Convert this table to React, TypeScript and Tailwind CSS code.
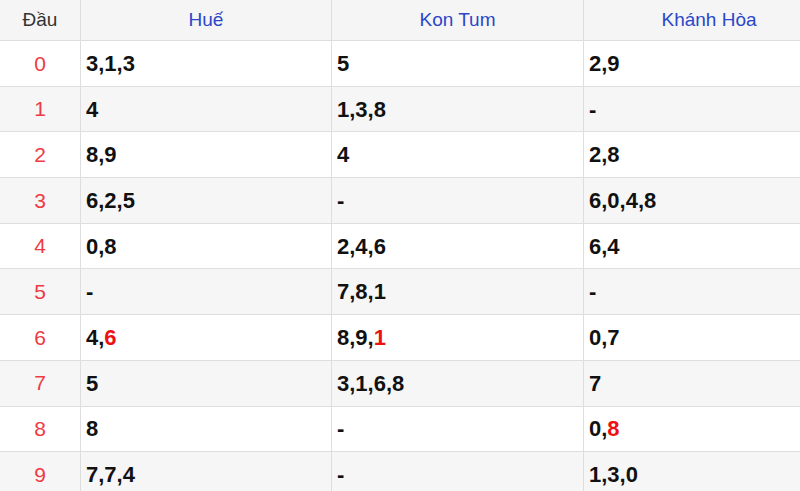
import React from "react";

type Part = { t: string; red?: boolean };
const rows: Part[][][] = [
  [[{ t: "3,1,3" }], [{ t: "5" }], [{ t: "2,9" }]],
  [[{ t: "4" }], [{ t: "1,3,8" }], [{ t: "-" }]],
  [[{ t: "8,9" }], [{ t: "4" }], [{ t: "2,8" }]],
  [[{ t: "6,2,5" }], [{ t: "-" }], [{ t: "6,0,4,8" }]],
  [[{ t: "0,8" }], [{ t: "2,4,6" }], [{ t: "6,4" }]],
  [[{ t: "-" }], [{ t: "7,8,1" }], [{ t: "-" }]],
  [[{ t: "4," }, { t: "6", red: true }], [{ t: "8,9," }, { t: "1", red: true }], [{ t: "0,7" }]],
  [[{ t: "5" }], [{ t: "3,1,6,8" }], [{ t: "7" }]],
  [[{ t: "8" }], [{ t: "-" }], [{ t: "0," }, { t: "8", red: true }]],
  [[{ t: "7,7,4" }], [{ t: "-" }], [{ t: "1,3,0" }]],
];

export default function App() {
  return (
    <div
      className="w-[800px] h-[491px] overflow-hidden bg-white"
      style={{ fontFamily: '"Liberation Sans", Arial, sans-serif' }}
    >
      <div className="w-[834px]">
        <div className="grid grid-cols-[80px_251px_252px_251px] h-[41px] bg-[#f5f5f5] border-b border-[#dedede] text-[19px]">
          <div className="flex items-center justify-center text-[#333]">Đầu</div>
          <div className="flex items-center justify-center text-[#2b47c9] border-l border-[#dedede]">Huế</div>
          <div className="flex items-center justify-center text-[#2b47c9] border-l border-[#dedede]">Kon Tum</div>
          <div className="flex items-center justify-center text-[#2b47c9] border-l border-[#dedede]">Khánh Hòa</div>
        </div>
        {rows.map((r, i) => (
          <div
            key={i}
            className={`grid grid-cols-[80px_251px_252px_251px] h-[45.7px] border-b border-[#dedede] ${
              i % 2 === 1 ? "bg-[#f6f6f6]" : "bg-white"
            }`}
          >
            <div className="flex items-center justify-center text-[21px] text-[#ee3a43]">{i}</div>
            {r.map((cell, j) => (
              <div
                key={j}
                className="flex items-center pl-[5px] border-l border-[#dedede] text-[22px] font-bold text-[#111]"
              >
                {cell.map((p, k) => (
                  <span key={k} className={p.red ? "text-[#ee1111]" : ""}>
                    {p.t}
                  </span>
                ))}
              </div>
            ))}
          </div>
        ))}
      </div>
    </div>
  );
}
